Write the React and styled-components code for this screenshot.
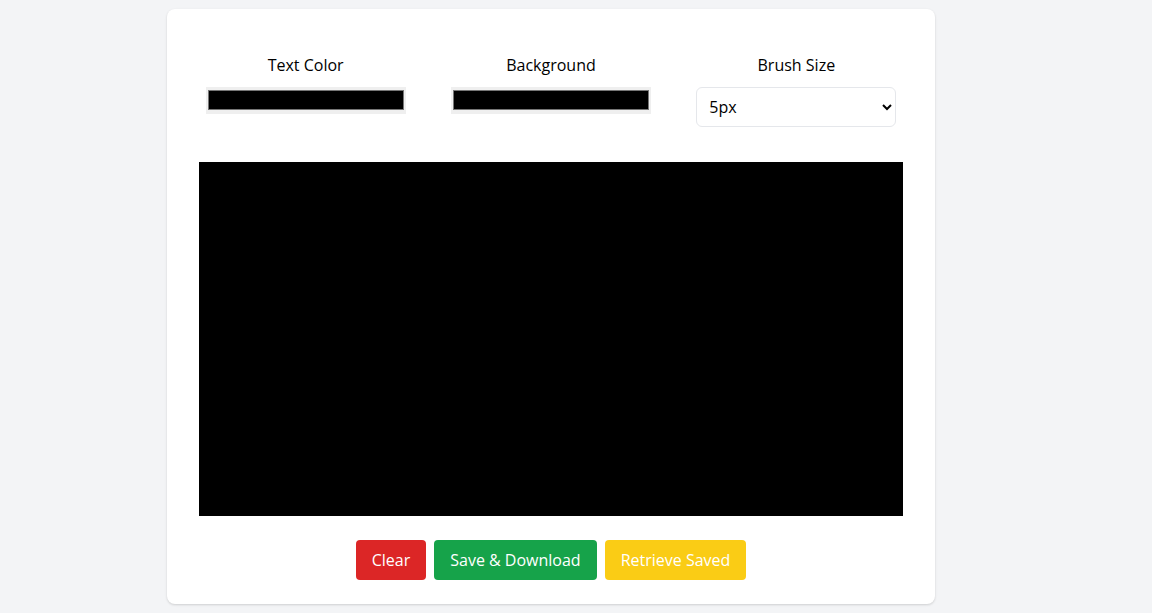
import React, { useState } from "react";
import styled, { createGlobalStyle } from "styled-components";

const GlobalStyle = createGlobalStyle`
  body {
    margin: 0;
    background: #f3f4f6;
    font-family: "Segoe UI", "Open Sans", "Noto Sans", sans-serif;
    color: #000;
  }
`;

const Page = styled.div`
  display: flex;
  padding: 9px 0 9px 167px;
`;

const Card = styled.div`
  width: 768px;
  box-sizing: border-box;
  background: #fff;
  border-radius: 8px;
  box-shadow: 0 1px 3px rgb(0 0 0 / 10%), 0 1px 2px rgb(0 0 0 / 6%);
  padding: 44px 32px 24px;
`;

const Controls = styled.div`
  display: grid;
  grid-template-columns: repeat(3, 1fr);
  column-gap: 32px;
  align-items: start;
`;

const Field = styled.div`
  display: flex;
  flex-direction: column;
  align-items: center;
`;

const Label = styled.label`
  font-size: 16px;
  line-height: 24px;
  margin-bottom: 10px;
`;

const ColorInput = styled.input`
  width: 200px;
  height: 27px;
  margin: 0;
  padding: 0;
  border: none;
  background: #efefef;
  cursor: pointer;

  &::-webkit-color-swatch-wrapper {
    padding: 3px 2px 4px;
  }

  &::-webkit-color-swatch {
    border: 1px solid #777;
    border-radius: 0;
  }
`;

const Select = styled.select`
  width: 200px;
  height: 40px;
  padding: 0 8px;
  font-family: inherit;
  font-size: 16px;
  color: #000;
  background: #fff;
  border: 1px solid #e5e7eb;
  border-radius: 6px;
`;

const Canvas = styled.canvas`
  display: block;
  width: 704px;
  height: 354px;
  margin-top: 35px;
  background: #000;
`;

const Buttons = styled.div`
  display: flex;
  justify-content: center;
  gap: 8px;
  margin-top: 24px;
`;

const colors = {
  red: "#dc2626",
  green: "#16a34a",
  yellow: "#facc15",
};

const Button = styled.button`
  height: 40px;
  padding: 0 16px;
  border: none;
  border-radius: 4px;
  font-family: inherit;
  font-size: 16px;
  color: #fff;
  background: ${(props) => colors[props.tone]};
  cursor: pointer;
`;

const App = () => {
  const [textColor, setTextColor] = useState("#000000");
  const [bgColor, setBgColor] = useState("#000000");
  const [brush, setBrush] = useState("5");

  return (
    <Page>
      <GlobalStyle />
      <Card>
        <Controls>
          <Field>
            <Label>Text Color</Label>
            <ColorInput type="color" value={textColor} onChange={(e) => setTextColor(e.target.value)} />
          </Field>
          <Field>
            <Label>Background</Label>
            <ColorInput type="color" value={bgColor} onChange={(e) => setBgColor(e.target.value)} />
          </Field>
          <Field>
            <Label>Brush Size</Label>
            <Select value={brush} onChange={(e) => setBrush(e.target.value)}>
              <option value="2">2px</option>
              <option value="5">5px</option>
              <option value="10">10px</option>
              <option value="20">20px</option>
            </Select>
          </Field>
        </Controls>
        <Canvas width={704} height={354} />
        <Buttons>
          <Button tone="red">Clear</Button>
          <Button tone="green">Save &amp; Download</Button>
          <Button tone="yellow">Retrieve Saved</Button>
        </Buttons>
      </Card>
    </Page>
  );
};

export default App;
